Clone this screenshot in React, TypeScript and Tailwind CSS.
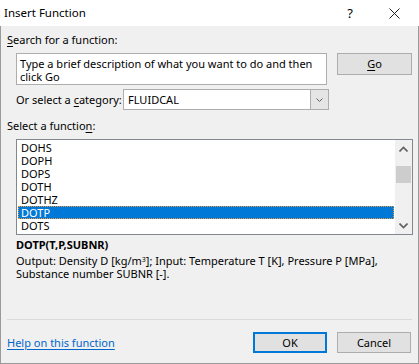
import React from 'react';

const font = { fontFamily: '"Noto Sans", "Segoe UI", sans-serif' };

const functions = ['DOHS', 'DOPH', 'DOPS', 'DOTH', 'DOTHZ', 'DOTP', 'DOTS'];

function Chevron({ dir }: { dir: 'up' | 'down' }) {
  return (
    <svg width="9" height="6" viewBox="0 0 9 6" className="block">
      <polyline
        points={dir === 'up' ? '0.5,5.5 4.5,1.5 8.5,5.5' : '0.5,0.5 4.5,4.5 8.5,0.5'}
        fill="none"
        stroke="#606060"
        strokeWidth="1.6"
      />
    </svg>
  );
}

export default function App() {
  return (
    <div className="w-[419px] h-[364px] bg-[#f0f0f0] text-[11px] text-black leading-[16px] flex flex-col" style={font}>
      {/* Title bar */}
      <div className="h-[26px] bg-white flex items-center shrink-0">
        <span className="pl-[4px] text-[11.5px] flex-1">Insert Function</span>
        <span className="w-[14px] text-center text-[13px] mr-[32px]">?</span>
        <svg width="11" height="11" viewBox="0 0 11 11" className="mr-[19px]">
          <path d="M0.5 0.5 L10.5 10.5 M10.5 0.5 L0.5 10.5" stroke="#222" strokeWidth="1" />
        </svg>
      </div>

      {/* Body */}
      <div className="flex-1 flex flex-col border-x border-b border-[#9a9a9a] px-[6px]">
        <div className="mt-[6px]">
          <u className="underline-offset-2">S</u>earch for a function:
        </div>

        <div className="mt-[5px] flex pl-[9px]">
          <div className="w-[311px] h-[32px] bg-white border border-[#adadad] px-[3px] leading-[13px] pt-[3px]">
            Type a brief description of what you want to do and then
            <br />
            click Go
          </div>
          <button className="ml-[10px] w-[75px] h-[22px] bg-[#e1e1e1] border border-[#adadad] leading-[16px]">
            <u className="underline-offset-2">G</u>o
          </button>
        </div>

        <div className="mt-[4px] flex items-center pl-[9px]">
          <span className="w-[107px] whitespace-nowrap">
            Or select a <u className="underline-offset-2">c</u>ategory:
          </span>
          <div className="w-[206px] h-[21px] bg-white border border-[#adadad] flex">
            <span className="flex-1 pl-[4px] leading-[19px]">FLUIDCAL</span>
            <div className="w-[18px] bg-[#e5e5e5] border-l border-[#adadad] flex items-center justify-center">
              <svg width="7" height="4" viewBox="0 0 7 4">
                <polyline points="0.5,0.5 3.5,3.5 6.5,0.5" fill="none" stroke="#606060" strokeWidth="1" />
              </svg>
            </div>
          </div>
        </div>

        <div className="mt-[8px]">
          Select a functio<u className="underline-offset-2">n</u>:
        </div>

        <div className="mt-[5px] ml-[9px] w-[397px] h-[96px] bg-white border border-[#828790] flex">
          <div className="flex-1 pt-[1px] pl-[1px] pr-[1px]">
            {functions.map((f) => (
              <div
                key={f}
                className={`h-[13px] leading-[13px] pl-[3px] ${
                  f === 'DOTP' ? 'bg-[#0078d7] text-white outline-1 outline-dotted outline-[#e89a3c] -outline-offset-1' : ''
                }`}
              >
                {f}
              </div>
            ))}
          </div>
          <div className="w-[17px] bg-[#f0f0f0] flex flex-col items-center">
            <div className="h-[17px] flex items-center justify-center">
              <Chevron dir="up" />
            </div>
            <div className="mt-[9px] h-[17px] w-[15px] bg-[#cdcdcd]" />
            <div className="flex-1" />
            <div className="h-[17px] flex items-center justify-center">
              <Chevron dir="down" />
            </div>
          </div>
        </div>

        <div className="mt-[2px] ml-[9px] font-bold">DOTP(T,P,SUBNR)</div>
        <div className="ml-[9px] mt-[1px] leading-[13px]">
          Output: Density D [kg/m<sup className="text-[7px]">3</sup>]; Input: Temperature T [K], Pressure P [MPa],
          <br />
          Substance number SUBNR [-].
        </div>

        <div className="mt-auto border-t border-[#dadada]" />

        <div className="mt-[12px] mb-[10px] flex items-center">
          <a href="#" className="flex-1 text-[#0066cc] underline underline-offset-2">
            Help on this function
          </a>
          <button className="w-[74px] h-[21px] bg-[#e1e1e1] border-2 border-[#0078d7] leading-[16px]">OK</button>
          <button className="ml-[10px] mr-[1px] w-[74px] h-[21px] bg-[#e1e1e1] border border-[#adadad] leading-[16px]">
            Cancel
          </button>
        </div>
      </div>
    </div>
  );
}
